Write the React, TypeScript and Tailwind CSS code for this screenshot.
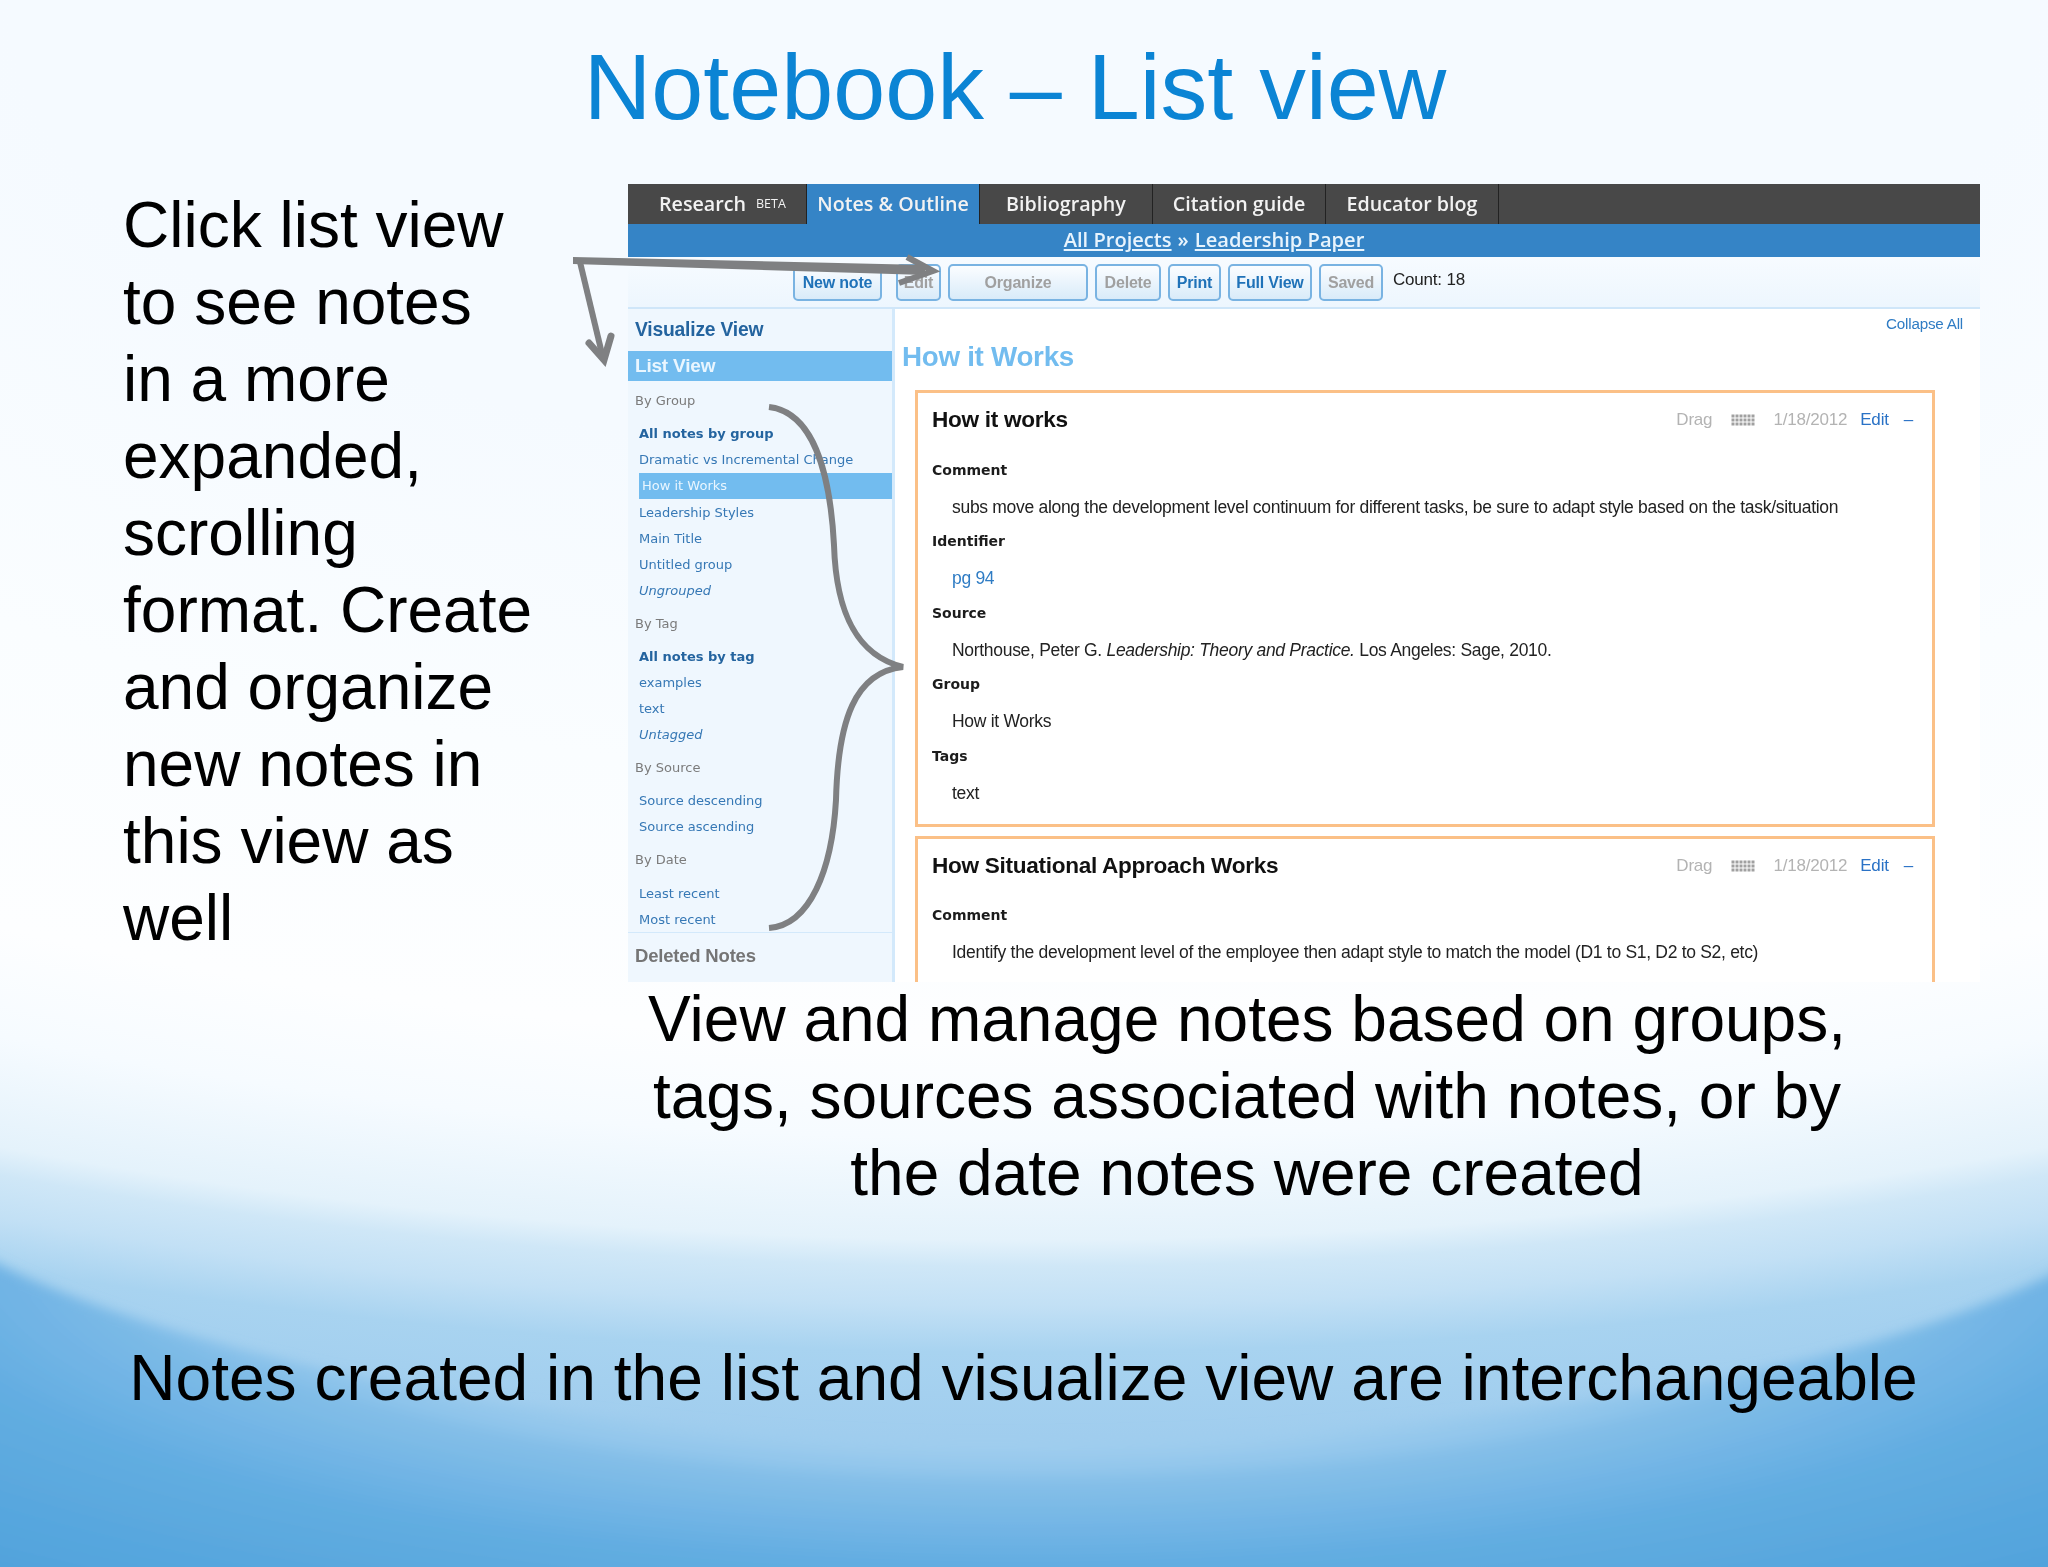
import React from "react";

const arial = "font-['Liberation_Sans',Arial,sans-serif]";

const tabs = ["Notes & Outline", "Bibliography", "Citation guide", "Educator blog"];

const toolbarButtons = [
  { label: "New note", width: "w-[89px]", off: false },
  { label: "Edit", width: "w-[45px] ml-[7px]", off: true },
  { label: "Organize", width: "w-[140px]", off: true },
  { label: "Delete", width: "w-[66px]", off: true },
  { label: "Print", width: "w-[53px]", off: false },
  { label: "Full View", width: "w-[84px]", off: false },
  { label: "Saved", width: "w-[64px]", off: true },
];

type SideRow = { label: string; bold?: boolean; italic?: boolean; active?: boolean };

const sideGroups: { title: string; rows: SideRow[] }[] = [
  {
    title: "By Group",
    rows: [
      { label: "All notes by group", bold: true },
      { label: "Dramatic vs Incremental Change" },
      { label: "How it Works", active: true },
      { label: "Leadership Styles" },
      { label: "Main Title" },
      { label: "Untitled group" },
      { label: "Ungrouped", italic: true },
    ],
  },
  {
    title: "By Tag",
    rows: [
      { label: "All notes by tag", bold: true },
      { label: "examples" },
      { label: "text" },
      { label: "Untagged", italic: true },
    ],
  },
  { title: "By Source", rows: [{ label: "Source descending" }, { label: "Source ascending" }] },
  { title: "By Date", rows: [{ label: "Least recent" }, { label: "Most recent" }] },
];

function SlideBackground() {
  return (
    <svg className="absolute inset-0 h-full w-full" viewBox="0 0 2048 1567" preserveAspectRatio="none">
      <defs>
        <radialGradient id="glow" gradientUnits="userSpaceOnUse" cx="0" cy="0" r="1" gradientTransform="translate(1024 0) scale(3380 1560)">
          <stop offset="0.3" stopColor="#f5faff" />
          <stop offset="0.5" stopColor="#fafdff" />
          <stop offset="0.667" stopColor="#fdfeff" />
          <stop offset="0.73" stopColor="#f6fbff" />
          <stop offset="0.795" stopColor="#e4f2fb" />
          <stop offset="0.812" stopColor="#cfe7f7" />
          <stop offset="0.837" stopColor="#c2e0f5" />
          <stop offset="0.867" stopColor="#a8d3f0" />
          <stop offset="0.921" stopColor="#a0cdee" />
          <stop offset="1" stopColor="#8fc5eb" />
        </radialGradient>
        <radialGradient id="swoosh" gradientUnits="userSpaceOnUse" cx="0" cy="0" r="1" gradientTransform="translate(1024 1250) scale(1536 422)">
          <stop offset="0.31" stopColor="#a8d3f0" />
          <stop offset="0.47" stopColor="#9fcdee" />
          <stop offset="0.555" stopColor="#8ac2ea" />
          <stop offset="0.664" stopColor="#74b6e6" />
          <stop offset="0.75" stopColor="#62ade2" />
          <stop offset="1" stopColor="#4fa2dc" />
        </radialGradient>
        <filter id="soft" filterUnits="userSpaceOnUse" x="-100" y="1100" width="2300" height="600">
          <feGaussianBlur stdDeviation="6" />
        </filter>
      </defs>
      <rect width="2048" height="1567" fill="url(#glow)" />
      <g filter="url(#soft)">
        <path d="M-60 1235 C 180 1370 620 1440 1000 1438 C 1380 1436 1840 1400 2110 1245 L2110 1640 L-60 1640 Z" fill="url(#swoosh)" />
        <path d="M-60 1225 C 200 1400 640 1480 1010 1478 C 1400 1476 1800 1420 2110 1235 L2110 1640 L-60 1640 Z" fill="#5faae2" opacity="0.12" />
      </g>
    </svg>
  );
}

function Arrows() {
  return (
    <svg className="pointer-events-none absolute inset-0 h-full w-full" viewBox="0 0 2048 1567" fill="none" stroke="#7f8082">
      <path d="M573 257 L573 264 L925 275 L925 265 Z" fill="#7f8082" stroke="none" />
      <path d="M907 257 L933 271 L899 283" strokeWidth="6" strokeLinejoin="miter" />
      <path d="M580 262 L603 358" strokeWidth="6" />
      <path d="M589 343 L604 360 L611 336" strokeWidth="7" strokeLinecap="round" strokeLinejoin="miter" />
      <path d="M769 407 C 812 412 830 470 834 545 C 836 610 855 655 903 667 C 855 672 838 720 836 800 C 832 870 810 925 769 928" strokeWidth="6" />
    </svg>
  );
}

function DragGrid() {
  return (
    <svg width="24" height="12" viewBox="0 0 24 12" fill="#a0a0a0">
      {[0, 4, 8].map((y) =>
        [0, 4, 8, 12, 16, 20].map((x) => <rect key={`${x}-${y}`} x={x + 0.5} y={y + 0.5} width="3" height="3" />)
      )}
    </svg>
  );
}

function Label({ children }: { children: React.ReactNode }) {
  return <div className="flex h-[34px] items-center font-['DejaVu_Sans',sans-serif] text-[14px] font-bold text-[#1c1c1c]">{children}</div>;
}

function Field({ label, children, blue }: { label: string; children: React.ReactNode; blue?: boolean }) {
  return (
    <>
      <Label>{label}</Label>
      <div className={`flex h-[37.5px] items-center pt-[2px] pl-[20px] ${arial} text-[17.5px] tracking-[-0.3px] whitespace-pre ${blue ? "text-[#2f7cc4]" : "text-[#222]"}`}>
        {children}
      </div>
    </>
  );
}

function CardHead({ title }: { title: string }) {
  return (
    <div className={`flex h-[60px] items-start justify-between pt-[11px] pr-[4px] ${arial}`}>
      <div className="text-[22.6px] leading-[32px] font-bold tracking-[-0.3px] text-[#111]">{title}</div>
      <div className="flex h-[32px] items-center text-[17px] tracking-[-0.2px]">
        <span className="text-[#b3b3b3]">Drag</span>
        <span className="ml-[19px]">
          <DragGrid />
        </span>
        <span className="ml-[18px] text-[#b3b3b3]">1/18/2012</span>
        <span className="ml-[13px] text-[#2a72c6]">Edit</span>
        <span className="ml-[15px] text-[#2a72c6]">–</span>
      </div>
    </div>
  );
}

function NotebookPanel() {
  return (
    <div className="flex h-[798px] w-[1352px] flex-col overflow-hidden bg-white blur-[0.5px]">
      <div className="flex h-[40px] shrink-0 bg-[#484848] font-['Open_Sans',sans-serif] text-[19.7px] font-semibold text-[#f2f2f2]">
        <div className="flex w-[179px] items-center border-r border-[#222] pl-[31px]">
          Research
          <span className="ml-[10px] text-[12.5px] font-normal">BETA</span>
        </div>
        {tabs.map((t, i) => (
          <div key={t} className={`flex w-[173px] items-center justify-center border-r border-[#222] ${i === 0 ? "bg-[#3584c6]" : ""}`}>
            {t}
          </div>
        ))}
      </div>
      <div className="flex h-[33px] shrink-0 items-center justify-center bg-[#3584c6] pr-[180px] font-['Open_Sans',sans-serif] text-[20.1px] font-semibold text-[#e8f4fd]">
        <span className="underline">All Projects</span>
        <span className="mx-[6px]">»</span>
        <span className="underline">Leadership Paper</span>
      </div>
      <div className={`flex h-[52px] shrink-0 gap-[7px] border-b-2 border-[#cfe6f9] bg-gradient-to-b from-[#f7fbff] to-[#edf6fe] pt-[7px] pl-[165px] ${arial}`}>
        {toolbarButtons.map((b) => (
          <div
            key={b.label}
            className={`flex h-[37px] items-center justify-center rounded-[5px] border-2 border-[#79b3e2] bg-gradient-to-b from-[#fbfdff] to-[#d9ebf9] text-[16px] font-bold tracking-[-0.2px] ${b.width} ${b.off ? "text-[#a0a0a0]" : "text-[#1f72b8]"}`}
          >
            {b.label}
          </div>
        ))}
        <div className="ml-[3px] pt-[3px] text-[17px] tracking-[-0.2px] text-[#222]">Count: 18</div>
      </div>
      <div className="flex min-h-0 flex-1">
        <div className="flex w-[267px] shrink-0 flex-col border-r-[3px] border-[#d3e9fb] bg-[#eff7fe]">
          <div className={`flex h-[42px] shrink-0 items-center pl-[7px] text-[19.3px] font-bold tracking-[-0.2px] text-[#24649f] ${arial}`}>Visualize View</div>
          <div className={`flex h-[30px] shrink-0 items-center bg-[#72bcef] pl-[7px] text-[19px] font-bold tracking-[-0.2px] text-[#e9f6ff] ${arial}`}>List View</div>
          {sideGroups.map((g) => (
            <div key={g.title} className="font-['DejaVu_Sans',sans-serif]">
              <div className="flex h-[40px] items-center pl-[7px] text-[13px] text-[#7b7b7b]">{g.title}</div>
              {g.rows.map((r) => (
                <div
                  key={r.label}
                  className={`ml-[11px] flex h-[26.1px] items-center text-[13px] whitespace-nowrap ${r.active ? "bg-[#72bcef] pl-[3px] text-[#e9f6ff]" : "text-[#3678b5]"} ${r.bold ? "font-bold text-[#24649f]" : ""} ${r.italic ? "italic" : ""}`}
                >
                  {r.label}
                </div>
              ))}
            </div>
          ))}
          <div className={`mt-0 flex flex-1 items-center border-t border-[#d3e9fb] pb-[4px] pl-[7px] text-[18.5px] font-bold tracking-[-0.2px] text-[#757575] ${arial}`}>Deleted Notes</div>
        </div>
        <div className="min-w-0 flex-1 overflow-hidden">
          <div className={`flex h-[30px] items-center justify-end pr-[17px] text-[15.2px] tracking-[-0.2px] text-[#2f7cc4] ${arial}`}>Collapse All</div>
          <div className={`flex h-[36px] items-center pl-[7px] text-[27.8px] font-bold tracking-[-0.3px] text-[#72bcef] ${arial}`}>How it Works</div>
          <div className="mt-[15px] ml-[20px] flex w-[1020px] flex-col gap-[9px]">
            <div className="border-[3px] border-[#fbc087] pr-[15px] pb-[13px] pl-[14px]">
              <CardHead title="How it works" />
              <Field label="Comment">subs move along the development level continuum for different tasks, be sure to adapt style based on the task/situation</Field>
              <Field label="Identifier" blue>
                pg 94
              </Field>
              <Field label="Source">
                Northouse, Peter G. <i>Leadership: Theory and Practice.</i> Los Angeles: Sage, 2010.
              </Field>
              <Field label="Group">How it Works</Field>
              <Field label="Tags">text</Field>
            </div>
            <div className="border-[3px] border-[#fbc087] pr-[15px] pb-[14px] pl-[14px]">
              <CardHead title="How Situational Approach Works" />
              <Field label="Comment">Identify the development level of the employee then adapt style to match the model (D1 to S1, D2 to S2, etc)</Field>
              <div className="pt-[2px]">
                <Label>Identifier</Label>
              </div>
            </div>
          </div>
        </div>
      </div>
    </div>
  );
}

export default function App() {
  return (
    <div className={`relative h-[1567px] w-[2048px] overflow-hidden ${arial}`}>
      <SlideBackground />
      <div className="relative">
        <div className="flex h-[184px] items-center justify-center pr-[18px] pb-[10px] text-[93.5px] leading-none text-[#0b84d4]">Notebook – List view</div>
        <div className="flex">
          <div className="w-[628px] shrink-0 pt-[3px] pl-[123px] text-[64px] leading-[77px] text-black">
            Click list view
            <br />
            to see notes
            <br />
            in a more
            <br />
            expanded,
            <br />
            scrolling
            <br />
            format. Create
            <br />
            and organize
            <br />
            new notes in
            <br />
            this view as
            <br />
            well
          </div>
          <div>
            <NotebookPanel />
            <div className="-mt-px w-[1352px] pr-[114px] text-center text-[64px] leading-[77px] text-black">
              View and manage notes based on groups,
              <br />
              tags, sources associated with notes, or by
              <br />
              the date notes were created
            </div>
          </div>
        </div>
        <div className="mt-[128px] pr-[1px] text-center text-[64.1px] leading-[77px] text-black">Notes created in the list and visualize view are interchangeable</div>
      </div>
      <Arrows />
    </div>
  );
}
